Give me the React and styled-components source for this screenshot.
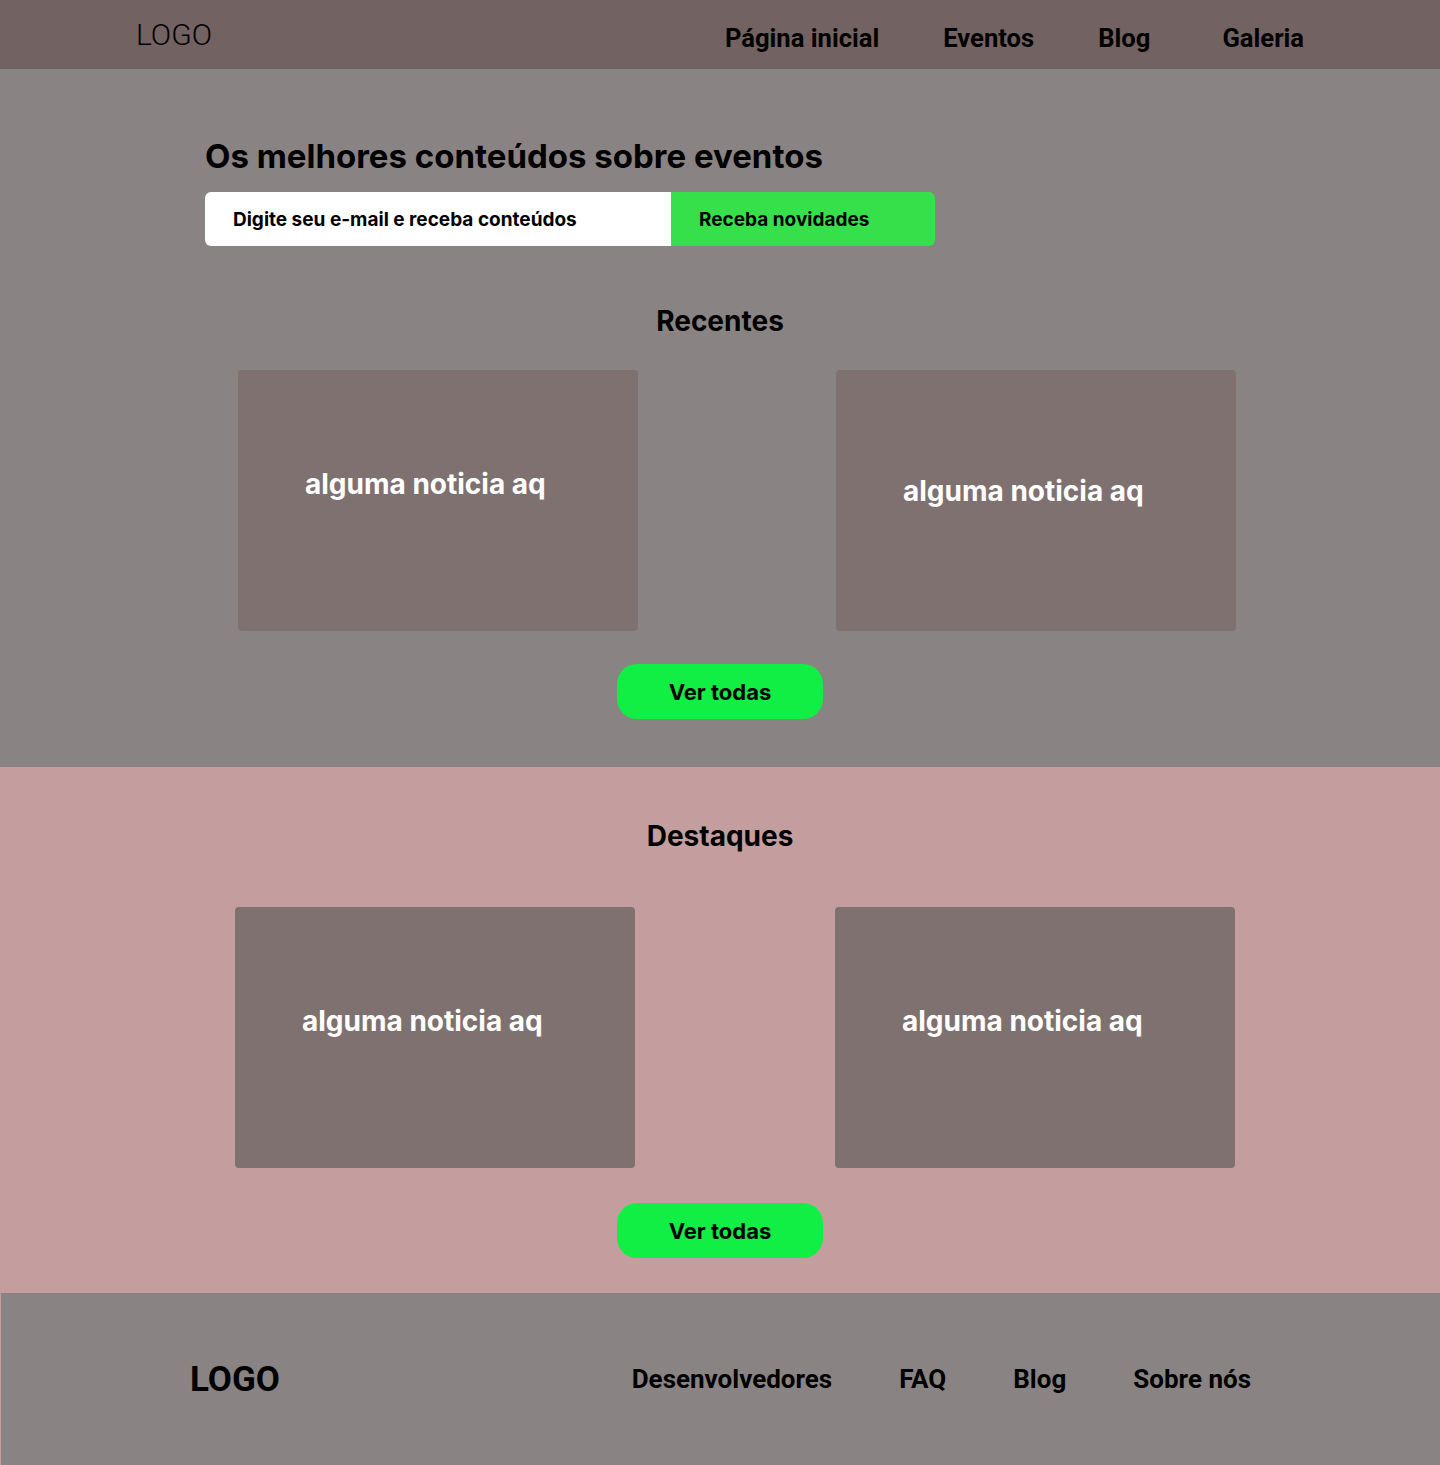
import React from "react";
import styled, { createGlobalStyle } from "styled-components";

const GlobalStyle = createGlobalStyle`
  * { box-sizing: border-box; }
  body {
    margin: 0;
    font-family: Inter, "Noto Sans", sans-serif;
    background: #8a8383;
  }
`;

const recentes = ["alguma noticia aq", "alguma noticia aq"];
const destaques = ["alguma noticia aq", "alguma noticia aq"];

export default function App() {
  return (
    <>
      <GlobalStyle />
      <Header>
        <HeaderLogo>LOGO</HeaderLogo>
        <Nav>
          <NavLink>Página inicial</NavLink>
          <NavLink>Eventos</NavLink>
          <NavLink>Blog</NavLink>
          <NavLink $extra={8}>Galeria</NavLink>
        </Nav>
      </Header>

      <Section $bg="#8a8383" $pad="67px 0 48px">
        <Hero>
          <HeroTitle>Os melhores conteúdos sobre eventos</HeroTitle>
          <Form>
            <EmailInput>Digite seu e-mail e receba conteúdos</EmailInput>
            <SubmitButton>Receba novidades</SubmitButton>
          </Form>
        </Hero>

        <SectionTitle $top={58}>Recentes</SectionTitle>
        <CardRow $top={32} $shift={17} $gap={198}>
          {recentes.map((t, i) => (
            <Card key={i} $textTop={i === 1 ? 104 : 97}>
              {t}
            </Card>
          ))}
        </CardRow>
        <MoreButton $top={33}>Ver todas</MoreButton>
      </Section>

      <Section $bg="#c49e9e" $pad="52px 0 35px">
        <SectionTitle $top={0}>Destaques</SectionTitle>
        <CardRow $top={54} $shift={15} $gap={200}>
          {destaques.map((t, i) => (
            <Card key={i} $textTop={97}>
              {t}
            </Card>
          ))}
        </CardRow>
        <MoreButton $top={35}>Ver todas</MoreButton>
      </Section>

      <Footer>
        <FooterLogo>LOGO</FooterLogo>
        <FooterNav>
          <FooterLink>Desenvolvedores</FooterLink>
          <FooterLink>FAQ</FooterLink>
          <FooterLink>Blog</FooterLink>
          <FooterLink>Sobre nós</FooterLink>
        </FooterNav>
      </Footer>
    </>
  );
}

const Header = styled.header`
  height: 69px;
  background: #736262;
  display: flex;
  align-items: center;
  justify-content: space-between;
  padding: 0 136px;
`;

const HeaderLogo = styled.div`
  font-family: Roboto, sans-serif;
  font-weight: 300;
  font-size: 30px;
  color: #000;
  margin-top: -1px;
`;

const Nav = styled.nav`
  display: flex;
  align-items: center;
  gap: 64px;
  margin-top: 7px;
`;

const NavLink = styled.a`
  font-family: Roboto, sans-serif;
  font-weight: 700;
  font-size: 25.6px;
  color: #000;
  margin-left: ${(p) => p.$extra || 0}px;
`;

const Section = styled.section`
  background: ${(p) => p.$bg};
  padding: ${(p) => p.$pad};
  display: flex;
  flex-direction: column;
  align-items: center;
`;

const Hero = styled.div`
  align-self: flex-start;
  margin-left: 205px;
  display: flex;
  flex-direction: column;
  gap: 16px;
`;

const HeroTitle = styled.h1`
  margin: 0;
  font-size: 33px;
  font-weight: 700;
  line-height: 40px;
  color: #000;
`;

const Form = styled.div`
  display: flex;
  width: 730px;
  height: 54px;
  border-radius: 6px;
  overflow: hidden;
`;

const EmailInput = styled.div`
  width: 466px;
  background: #fff;
  display: flex;
  align-items: center;
  padding-left: 28px;
  font-size: 19px;
  font-weight: 700;
  color: #000;
`;

const SubmitButton = styled.button`
  flex: 1;
  border: none;
  background: #36e04a;
  text-align: left;
  padding: 0 0 0 28px;
  font-family: Inter, sans-serif;
  font-size: 19px;
  font-weight: 700;
  color: #000;
`;

const SectionTitle = styled.h2`
  margin: ${(p) => p.$top}px 0 0;
  font-size: 28px;
  font-weight: 700;
  line-height: 34px;
  color: #000;
`;

const CardRow = styled.div`
  margin-top: ${(p) => p.$top}px;
  display: flex;
  gap: ${(p) => p.$gap}px;
  transform: translateX(${(p) => p.$shift || 0}px);
`;

const Card = styled.div`
  width: 400px;
  height: 261px;
  border-radius: 4px;
  background: #7f7170;
  padding: ${(p) => p.$textTop}px 0 0 67px;
  font-size: 28px;
  font-weight: 700;
  line-height: 34px;
  color: #fff;
`;

const MoreButton = styled.button`
  margin-top: ${(p) => p.$top}px;
  width: 206px;
  height: 55px;
  border: none;
  border-radius: 20px;
  background: #11ee44;
  font-family: Inter, sans-serif;
  font-size: 22px;
  font-weight: 700;
  color: #000;
`;

const Footer = styled.footer`
  height: 172px;
  background: #8a8383;
  border-left: 1px solid #c49e9e;
  display: flex;
  align-items: center;
  justify-content: space-between;
  padding: 0 189px 0 189px;
`;

const FooterLogo = styled.div`
  font-family: Roboto, sans-serif;
  font-weight: 700;
  font-size: 35px;
  color: #000;
`;

const FooterNav = styled.nav`
  display: flex;
  gap: 67px;
`;

const FooterLink = styled.a`
  font-family: Roboto, sans-serif;
  font-weight: 700;
  font-size: 26px;
  color: #000;
`;
